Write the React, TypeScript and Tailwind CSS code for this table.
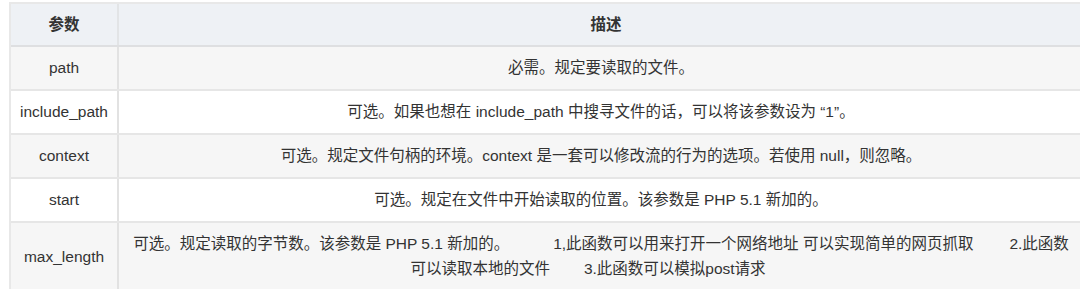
import React from 'react';

interface Row {
  name: string;
  desc: React.ReactNode;
}

const rows: Row[] = [
  { name: 'path', desc: '必需。规定要读取的文件。' },
  { name: 'include_path', desc: '可选。如果也想在 include_path 中搜寻文件的话，可以将该参数设为 “1”。' },
  { name: 'context', desc: '可选。规定文件句柄的环境。context 是一套可以修改流的行为的选项。若使用 null，则忽略。' },
  { name: 'start', desc: '可选。规定在文件中开始读取的位置。该参数是 PHP 5.1 新加的。' },
];

const Gap = ({ w }: { w: string }) => <span className={`inline-block ${w}`} />;

const App: React.FC = () => {
  return (
    <div
      className="w-[1080px] h-[289px] overflow-hidden bg-white text-[15.5px] text-[#333]"
      style={{ fontFamily: '"Liberation Sans", "Noto Sans CJK SC", sans-serif' }}
    >
      <div className="ml-[9px] mt-[2px] w-[1074px] border-l-2 border-t-2 border-[#e8e8e8]">
        {/* Header */}
        <div className="flex h-[43px] bg-[#eef1f5] border-b-2 border-[#dedfe1] font-bold">
          <div className="w-[108px] shrink-0 flex items-center justify-center border-r-2 border-[#e2e4e6]">参数</div>
          <div className="flex-1 flex items-center justify-center pl-[10px]">描述</div>
        </div>

        {rows.map((row, i) => (
          <div
            key={row.name}
            className={`flex h-[44px] border-b-2 border-[#e6e6e6] ${i % 2 === 0 ? 'bg-[#f6f6f6]' : 'bg-white'}`}
          >
            <div className="w-[108px] shrink-0 flex items-center justify-center border-r-2 border-[#e2e2e2]">{row.name}</div>
            <div className="flex-1 flex items-center justify-center">{row.desc}</div>
          </div>
        ))}

        {/* max_length row */}
        <div className="flex h-[70px] bg-[#f6f6f6]">
          <div className="w-[108px] shrink-0 flex items-center justify-center border-r-2 border-[#e2e2e2] pb-[2px]">
            max_length
          </div>
          <div className="flex-1 pt-[8px] text-center leading-[25px] whitespace-nowrap">
            可选。规定读取的字节数。该参数是 PHP 5.1 新加的。
            <Gap w="w-[44px]" />
            1,此函数可以用来打开一个网络地址 可以实现简单的网页抓取
            <Gap w="w-[36px]" />
            2.此函数
            <br />
            可以读取本地的文件
            <Gap w="w-[34px]" />
            3.此函数可以模拟post请求
            <Gap w="w-[26px]" />
          </div>
        </div>
      </div>
    </div>
  );
};

export default App;
